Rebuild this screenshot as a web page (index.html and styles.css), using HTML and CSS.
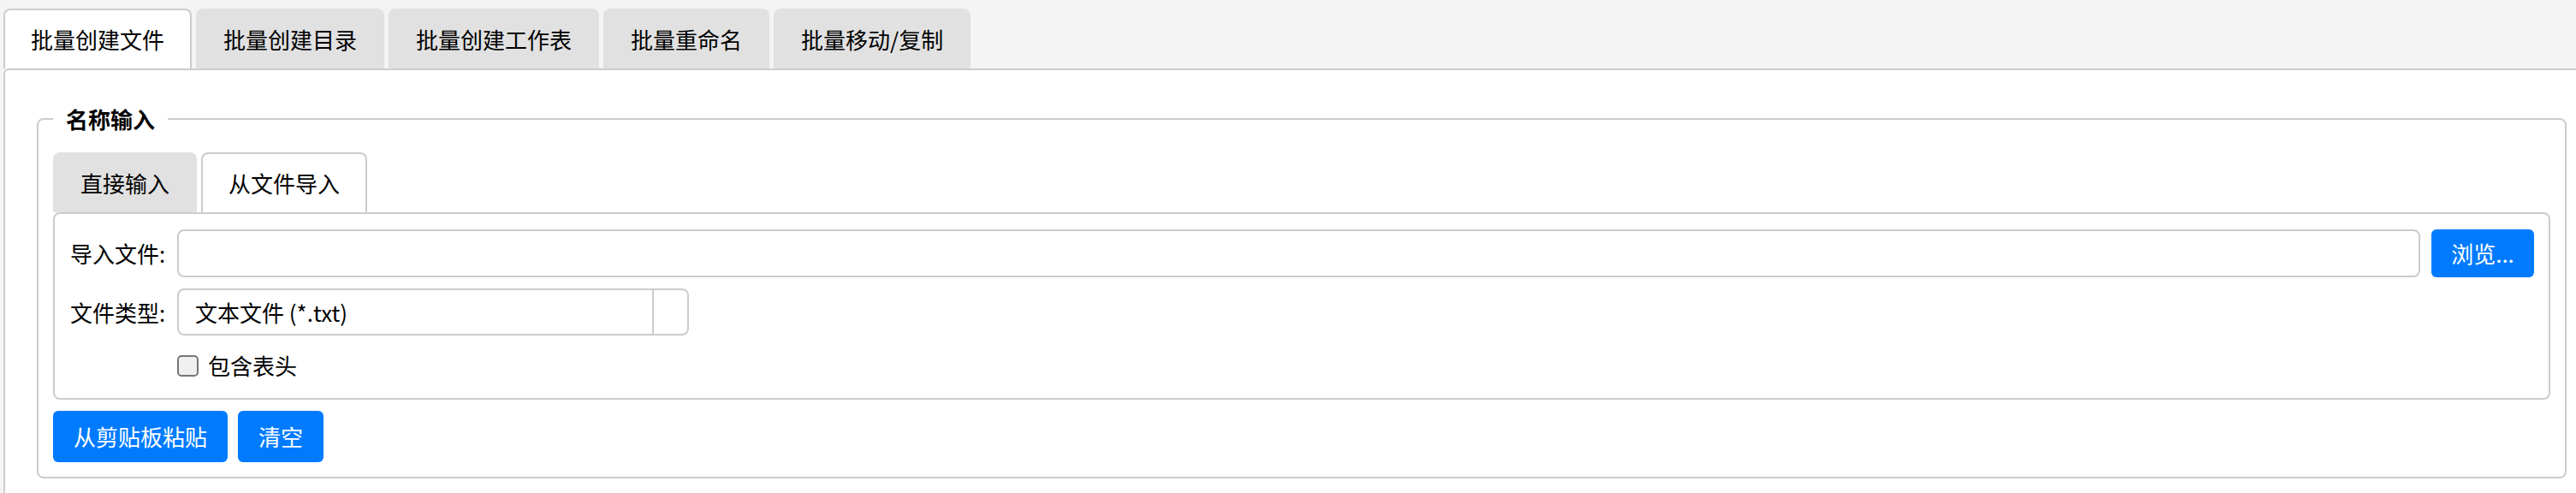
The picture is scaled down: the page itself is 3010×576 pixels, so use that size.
FILE: index.html
```html
<!DOCTYPE html>
<html lang="zh-CN">
<head>
<meta charset="utf-8">
<title>批量创建文件</title>
<link rel="stylesheet" href="styles.css">
</head>
<body>
  <div class="tabbar">
    <div class="tab active">批量创建文件</div>
    <div class="tab">批量创建目录</div>
    <div class="tab">批量创建工作表</div>
    <div class="tab">批量重命名</div>
    <div class="tab">批量移动/复制</div>
  </div>
  <div class="panel">
    <fieldset class="group">
      <legend class="group-title">名称输入</legend>
      <div class="subtabs">
        <div class="tab">直接输入</div>
        <div class="tab active">从文件导入</div>
      </div>
      <div class="subpanel">
        <div class="row">
          <span class="label">导入文件:</span>
          <div class="input"></div>
          <button class="btn btn-browse">浏览...</button>
        </div>
        <div class="row">
          <span class="label">文件类型:</span>
          <div class="select">
            <span class="select-value">文本文件 (*.txt)</span>
            <span class="select-btn"></span>
          </div>
        </div>
        <div class="row row-check">
          <label class="check"><input type="checkbox" class="checkbox"><span>包含表头</span></label>
        </div>
      </div>
      <div class="actions">
        <button class="btn">从剪贴板粘贴</button>
        <button class="btn">清空</button>
      </div>
    </fieldset>
  </div>
</body>
</html>
```

FILE: styles.css
```css
* { box-sizing: border-box; }

html, body {
  margin: 0;
  padding: 0;
}

body {
  background: #f4f4f4;
  font-family: "Noto Sans CJK SC", "Noto Sans", sans-serif;
  font-size: 26px;
  color: #000;
  overflow: hidden;
}

.tabbar {
  display: flex;
  gap: 5px;
  padding: 10px 0 0 4px;
}

.tab {
  height: 70px;
  padding: 0 30px;
  display: flex;
  align-items: center;
  background: #e1e1e1;
  border: 2px solid transparent;
  border-bottom: 0;
  border-radius: 8px 8px 0 0;
  line-height: 1;
  white-space: nowrap;
}

.tab.active {
  background: #fff;
  border-color: #ccc;
}

.panel {
  margin-left: 4px;
  background: #fff;
  border: 2px solid #ccc;
  border-right: 0;
  border-bottom: 0;
  border-radius: 6px 0 0 0;
  padding: 39px 11px 30px 37px;
}

.group {
  margin: 0;
  min-width: 0;
  border: 2px solid #ccc;
  border-radius: 8px;
  padding: 0 17px 17px;
}

.group-title {
  padding: 0 15px;
  font-weight: bold;
  line-height: 36px;
}

.subtabs {
  display: flex;
  gap: 5px;
  margin-top: 21px;
}

.subpanel {
  border: 2px solid #ccc;
  border-radius: 8px;
  padding: 18px 17px 16px 18px;
  display: flex;
  flex-direction: column;
  gap: 13px;
}

.row {
  display: flex;
  align-items: center;
  gap: 13px;
}

.label {
  flex: 0 0 112px;
  white-space: nowrap;
  line-height: 1;
}

.input {
  flex: 1;
  height: 56px;
  border: 2px solid #ccc;
  border-radius: 8px;
  background: #fff;
}

.select {
  width: 598px;
  height: 55px;
  border: 2px solid #ccc;
  border-radius: 8px;
  display: flex;
  align-items: stretch;
}

.select-value {
  flex: 1;
  display: flex;
  align-items: center;
  padding-left: 19px;
  line-height: 1;
}

.select-btn {
  width: 41px;
  border-left: 2px solid #ccc;
}

.row-check {
  height: 44px;
  padding-left: 125px;
}

.check {
  display: flex;
  align-items: center;
  gap: 11px;
  line-height: 1;
}

.checkbox {
  appearance: none;
  -webkit-appearance: none;
  margin: 0;
  width: 25px;
  height: 25px;
  border: 2px solid #767676;
  border-radius: 5px;
  background: #efefef;
}

.actions {
  display: flex;
  gap: 12px;
  margin-top: 13px;
}

.btn {
  height: 60px;
  padding: 0 24px;
  border: 0;
  border-radius: 6px;
  background: #007bff;
  color: #fff;
  font-family: inherit;
  font-size: 26px;
  line-height: 1;
  white-space: nowrap;
}

.btn-browse {
  height: 56px;
  width: 120px;
  padding: 0;
}
```
